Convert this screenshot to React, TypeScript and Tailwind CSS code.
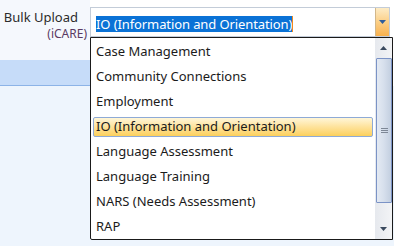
import { useState } from 'react'

const ITEMS = [
  'Case Management',
  'Community Connections',
  'Employment',
  'IO (Information and Orientation)',
  'Language Assessment',
  'Language Training',
  'NARS (Needs Assessment)',
  'RAP',
]

const font = { fontFamily: '"Noto Sans", "Open Sans", Arial, sans-serif' }

export default function App() {
  const [selected] = useState('IO (Information and Orientation)')

  return (
    <div className="relative w-[394px] h-[246px] overflow-hidden bg-[#eef5fd] text-[13px] text-[#1b1b1b]" style={font}>
      <div className="flex">
        {/* Left labels */}
        <div className="w-[90px] shrink-0">
          <div className="h-[60px] bg-[#f5f8fd] flex flex-col items-end pr-[12px] pt-[8px]">
            <span className="leading-[18px] text-[#2b2b2b]">Bulk Upload</span>
            <span className="leading-[15px] text-[12px] text-[#5a3a63] -mr-[9px]">(iCARE)</span>
          </div>
          <div className="h-[26px] bg-[#c6dcf9] border-b border-[#8cb3e7]" />
        </div>

        {/* Combo box */}
        <div className="flex-1 bg-white pt-[7px]">
          <div className="flex h-[30px] w-[300px] border border-[#c3ccd8] bg-white">
            <div className="flex-1 flex items-center pl-[5px] pt-[3px]">
              <span className="bg-[#0a72d6] text-white leading-[16px] tracking-[-0.1px]">{selected}</span>
              <span className="w-[1px] h-[16px] bg-[#f08a1c]" />
            </div>
            <div className="w-[14px] border-l border-[#d2b78a] bg-gradient-to-b from-[#fdecc6] via-[#fbcf86] to-[#f8b14c] flex items-center justify-center">
              <svg width="7" height="4" viewBox="0 0 7 4">
                <path d="M0 0h7L3.5 4z" fill="#2f5d9c" />
              </svg>
            </div>
          </div>
        </div>
      </div>

      {/* Dropdown list */}
      <div className="absolute left-[90px] top-[37px] w-[303px] h-[203px] border border-[#1a1a1a] rounded-bl-[2px] bg-white flex">
        <div className="flex-1 pt-[1px]">
          {ITEMS.map(item => (
            <div key={item} className="h-[25px] flex items-center pl-[2px] pr-[2px]">
              {item === selected ? (
                <div className="w-full h-[20px] flex items-center pl-[2px] border border-[#8eaad6] rounded-[2px] bg-gradient-to-b from-[#fff6d8] via-[#fee29a] to-[#fcd05a]">
                  {item}
                </div>
              ) : (
                <div className="pl-[3px]">{item}</div>
              )}
            </div>
          ))}
        </div>

        {/* Scrollbar */}
        <div className="w-[17px] shrink-0 bg-gradient-to-r from-[#e6e9ee] to-[#f3f4f6] flex flex-col items-center">
          <div className="h-[20px] w-full flex items-center justify-center">
            <svg width="7" height="4" viewBox="0 0 7 4">
              <path d="M3.5 0L7 4H0z" fill="#3a4a5e" />
            </svg>
          </div>
          <div className="h-[145px] w-[16px] mr-[-1px] border border-[#7b93c6] rounded-[1px] bg-gradient-to-r from-[#e4eaf3] via-[#d6dfec] to-[#c3cfe0] flex items-center justify-center">
            <div className="flex flex-col gap-[1px]">
              <div className="w-[7px] h-[1px] bg-[#7d8796]" />
              <div className="w-[7px] h-[1px] bg-[#7d8796]" />
              <div className="w-[7px] h-[1px] bg-[#7d8796]" />
            </div>
          </div>
          <div className="flex-1 w-full flex items-end justify-center pb-[8px]">
            <svg width="7" height="4" viewBox="0 0 7 4">
              <path d="M0 0h7L3.5 4z" fill="#3a4a5e" />
            </svg>
          </div>
        </div>
      </div>
    </div>
  )
}
